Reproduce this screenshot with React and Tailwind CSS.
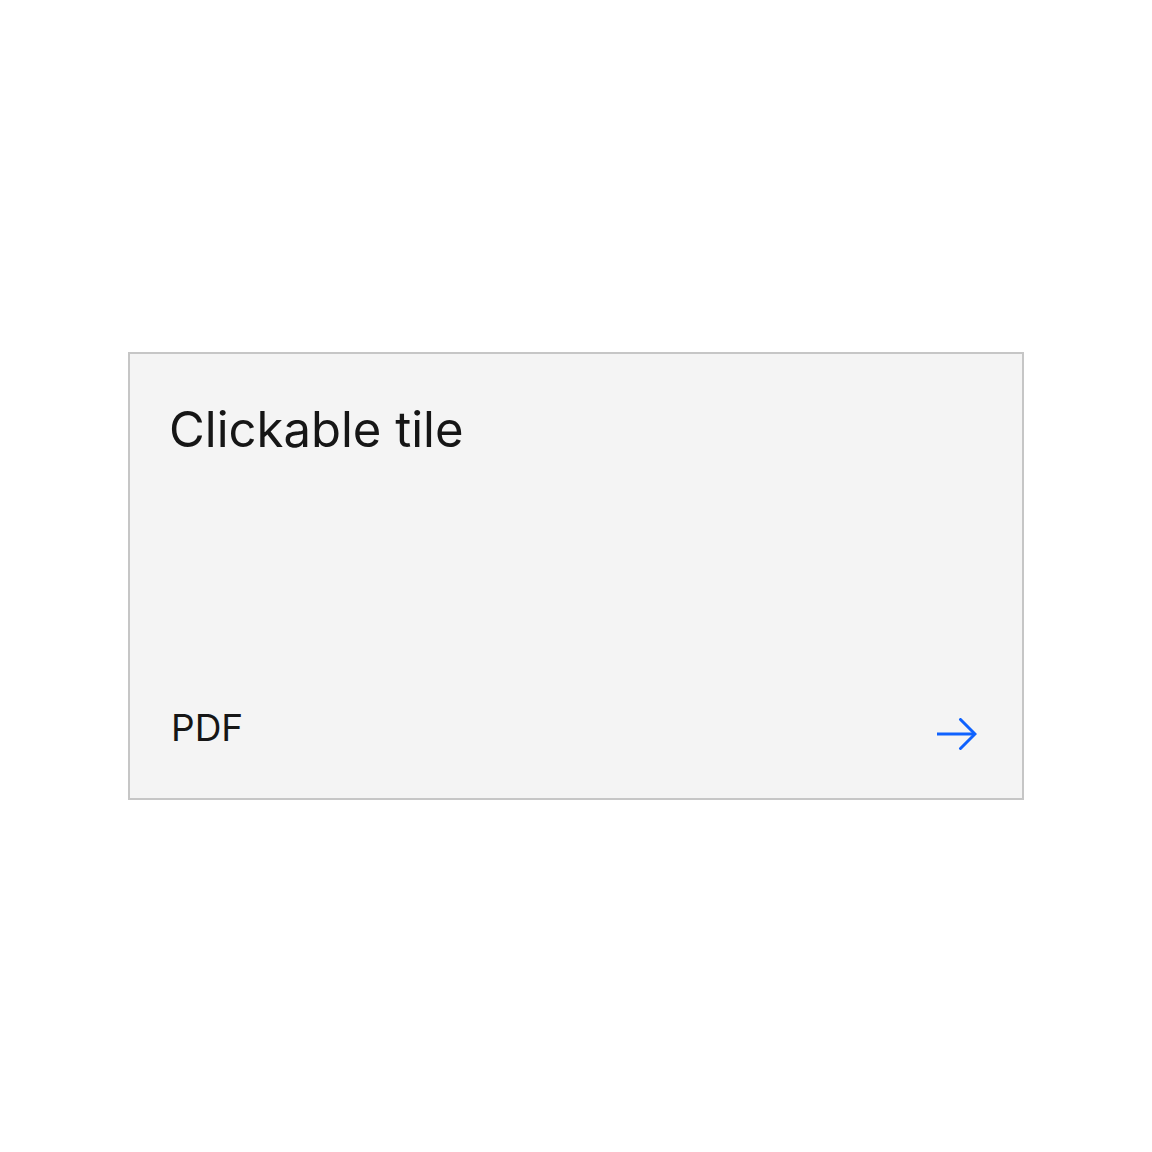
import React from "react";

function ArrowRight() {
  return (
    <svg width="40" height="32" viewBox="0 0 40 32" fill="none" className="block">
      <path d="M0 16H37" stroke="#0f62fe" strokeWidth="3" />
      <path d="M23.5 1.5L38 16L23.5 30.5" stroke="#0f62fe" strokeWidth="3" strokeLinecap="round" />
    </svg>
  );
}

export default function App() {
  return (
    <div
      className="h-screen w-full flex items-center justify-center bg-white"
      style={{ fontFamily: "Inter, 'Noto Sans', sans-serif" }}
    >
      <a
        href="#"
        className="w-[896px] h-[448px] border-2 border-[#c6c6c6] bg-[#f4f4f4] flex flex-col justify-between pl-[39px] pr-[40px] pt-[44px] pb-[40px] text-[#161616]"
      >
        <h3 className="text-[49px] leading-[64px] font-normal">Clickable tile</h3>
        <div className="flex items-end justify-between">
          <span className="text-[37px] leading-[44px] mb-[8px] ml-[2px]">PDF</span>
          <span className="mb-[8px] mr-[5px]">
            <ArrowRight />
          </span>
        </div>
      </a>
    </div>
  );
}
